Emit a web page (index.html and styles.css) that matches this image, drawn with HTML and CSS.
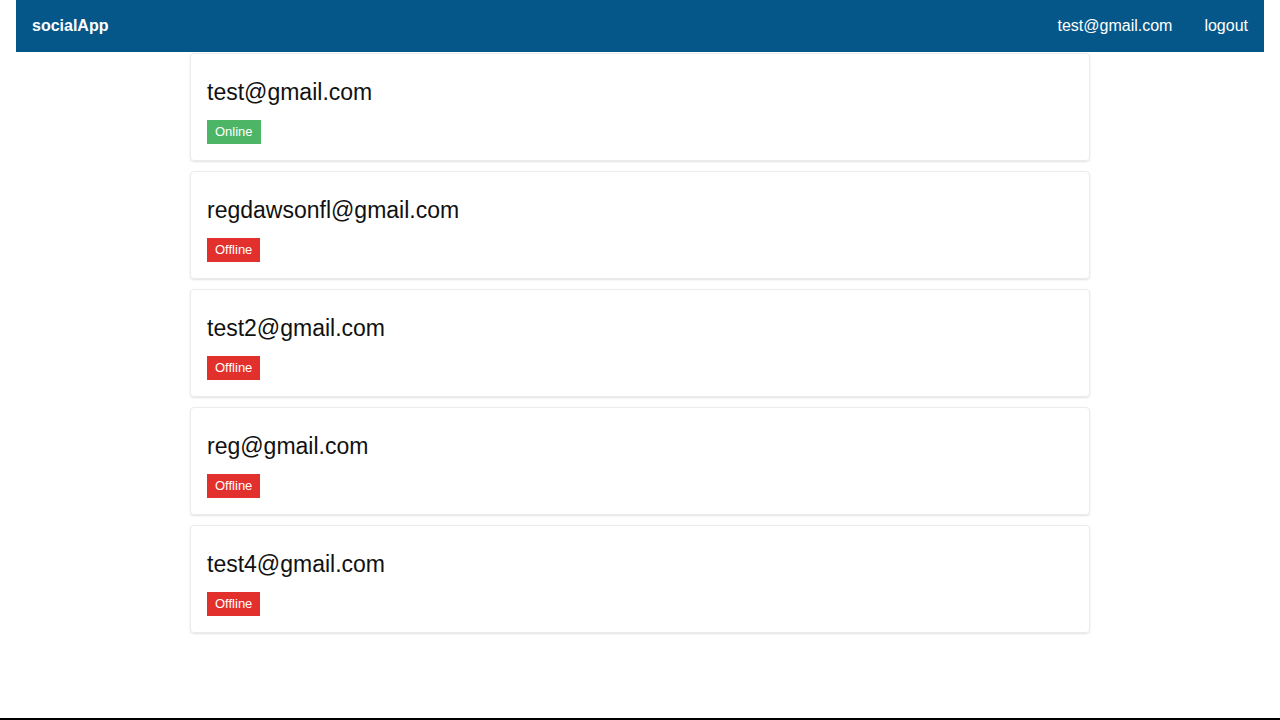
FILE: index.html
```html
<!DOCTYPE html>
<html lang="en">
<head>
<meta charset="utf-8">
<title>socialApp</title>
<link rel="stylesheet" href="styles.css">
</head>
<body>
<div class="page">
  <header class="navbar">
    <span class="brand">socialApp</span>
    <nav class="nav-links">
      <span class="nav-link">test@gmail.com</span>
      <span class="nav-link">logout</span>
    </nav>
  </header>
  <main class="list">
    <div class="card">
      <div class="email">test@gmail.com</div>
      <span class="badge online">Online</span>
    </div>
    <div class="card">
      <div class="email">regdawsonfl@gmail.com</div>
      <span class="badge offline">Offline</span>
    </div>
    <div class="card">
      <div class="email">test2@gmail.com</div>
      <span class="badge offline">Offline</span>
    </div>
    <div class="card">
      <div class="email">reg@gmail.com</div>
      <span class="badge offline">Offline</span>
    </div>
    <div class="card">
      <div class="email">test4@gmail.com</div>
      <span class="badge offline">Offline</span>
    </div>
  </main>
</div>
</body>
</html>
```

FILE: styles.css
```css
* { box-sizing: border-box; }
html, body {
  margin: 0;
  padding: 0;
  background: #fff;
  font-family: "Liberation Sans", Arial, sans-serif;
  color: #111;
}
.page {
  height: 720px;
  border-bottom: 2px solid #000;
  display: flex;
  flex-direction: column;
}
.navbar {
  margin: 0 16px;
  height: 52px;
  background: #05578a;
  color: #fff;
  display: flex;
  align-items: center;
  justify-content: space-between;
  padding: 0 16px;
}
.brand {
  font-weight: bold;
  font-size: 16px;
}
.nav-links {
  display: flex;
  gap: 32px;
  font-size: 16px;
}
.list {
  width: 900px;
  margin: 1px auto 0;
  display: flex;
  flex-direction: column;
  gap: 10px;
}
.card {
  height: 108px;
  border: 1px solid #ebebeb;
  border-radius: 4px;
  box-shadow: 0 1px 2px rgba(0, 0, 0, 0.12);
  padding: 24px 16px 0;
  display: flex;
  flex-direction: column;
  align-items: flex-start;
}
.email {
  font-size: 23px;
  line-height: 28px;
  color: #111;
}
.badge {
  margin-top: 14px;
  height: 24px;
  line-height: 24px;
  padding: 0 8px;
  font-size: 13px;
  color: #fff;
}
.online { background: #4cb566; }
.offline { background: #e2302c; }
```
